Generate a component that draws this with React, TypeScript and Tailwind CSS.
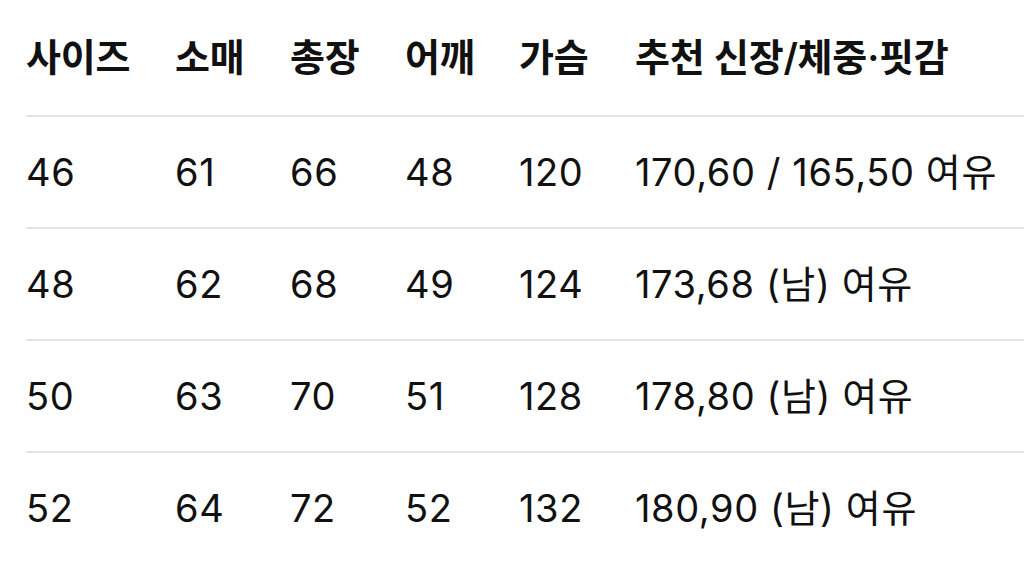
const header = ['사이즈', '소매', '총장', '어깨', '가슴', '추천 신장/체중·핏감'];

const rows = [
  ['46', '61', '66', '48', '120', '170,60 / 165,50 여유'],
  ['48', '62', '68', '49', '124', '173,68 (남) 여유'],
  ['50', '63', '70', '51', '128', '178,80 (남) 여유'],
  ['52', '64', '72', '52', '132', '180,90 (남) 여유'],
];

const cols = 'grid grid-cols-[149px_115px_115px_114px_116px_1fr] items-center';

export default function App() {
  return (
    <div
      className="w-[1024px] h-[561px] bg-white overflow-hidden text-[#111]"
      style={{ fontFamily: '"Inter", "Noto Sans CJK KR", sans-serif' }}
    >
      <div className="ml-[26px]">
        <div className={`${cols} h-[115px] text-[38px] font-semibold tracking-[-0.2px]`}>
          {header.map((h) => (
            <div key={h} className="whitespace-nowrap">{h}</div>
          ))}
        </div>
        {rows.map((r) => (
          <div key={r[0]} className={`${cols} h-[112px] border-t-2 border-[#e3e3e3] text-[38px] tracking-[0.6px]`}>
            {r.map((c, i) => (
              <div key={i} className="whitespace-nowrap">{c}</div>
            ))}
          </div>
        ))}
      </div>
    </div>
  );
}
